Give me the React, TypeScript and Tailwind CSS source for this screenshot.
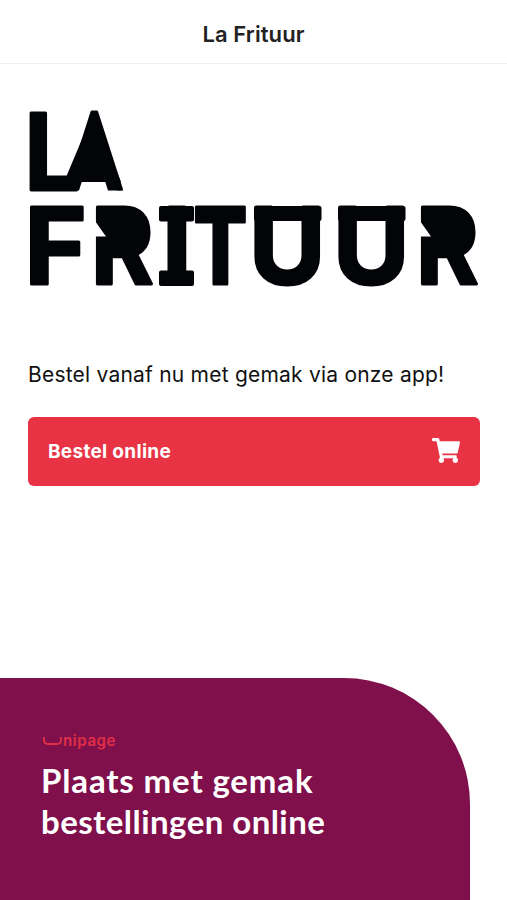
import React from 'react';
import { FaShoppingCart } from 'react-icons/fa';

interface Glyph {
  char: string;
  x: number;
  y: number;
  scale: number;
  weight?: number;
}

// Each letter of the wordmark has its own offset and horizontal stretch
const GLYPHS: Glyph[] = [
  { char: 'L', x: -3.5, y: 81.5, scale: 0.93 },
  { char: 'A', x: 36.5, y: 81, scale: 0.86, weight: 200 },
  { char: 'F', x: -3.5, y: 176, scale: 1 },
  { char: 'R', x: 63, y: 176, scale: 0.9 },
  { char: 'I', x: 134, y: 176, scale: 1 },
  { char: 'T', x: 165.5, y: 176, scale: 0.75, weight: 800 },
  { char: 'U', x: 221, y: 175.5, scale: 0.985 },
  { char: 'U', x: 305, y: 175.5, scale: 0.985 },
  { char: 'R', x: 388, y: 176, scale: 0.9 },
];

function Wordmark() {
  return (
    <svg
      viewBox="0 0 452 180"
      className="block w-[452px] h-[180px] overflow-visible"
      role="img"
      aria-label="La Frituur"
    >
      <g
        className="fill-[#020407] stroke-[#020407] font-['Inter'] font-bold"
        fontSize="106"
        strokeWidth="3"
        strokeLinejoin="round"
      >
        {GLYPHS.map((glyph, index) => (
          <text
            key={index}
            style={{ fontWeight: glyph.weight }}
            transform={`translate(${glyph.x} ${glyph.y}) scale(${glyph.scale} 1)`}
          >
            {glyph.char}
          </text>
        ))}
      </g>
      <g className="fill-[#020407]">
        {/* Filled counters */}
        <path d="M65 5L36 74h57z" />
        <rect x="80" y="108" width="28" height="28" />
        <rect x="405" y="108" width="28" height="28" />
        {/* Feet on both sides of the notch */}
        <path d="M36 73h18l-3 9.5H36zM77 73h14l4 9.5H80z" />
        {/* Slabs */}
        <rect x="131" y="98" width="35" height="15.5" rx="2" />
        <rect x="131" y="162.5" width="35" height="15.5" rx="2" />
        {/* Lids */}
        <rect x="226" y="98" width="67.5" height="15" rx="2" />
        <rect x="310" y="98" width="67.5" height="15" rx="2" />
      </g>
      {/* Notches cut into the R stems */}
      <path className="fill-white" d="M67 113l11 15.5H67zM392 113l11 15.5h-11z" />
    </svg>
  );
}

function Header({ title }: { title: string }) {
  return (
    <header className="h-16 border-b border-[#f1f1f1] flex items-center justify-center pt-1">
      <h1 className="font-['Inter',sans-serif] text-[22px] font-semibold leading-none tracking-[0.1px] text-[#222]">
        {title}
      </h1>
    </header>
  );
}

function Banner() {
  return (
    <section className="w-[470px] grow bg-[#7f104b] rounded-tr-[126px] pl-[41px] pt-[54px] text-white">
      {/* unipage logo */}
      <div className="flex items-start h-5 pl-0.5 text-[#e12f47]">
        <svg viewBox="0 0 20 9" className="w-5 h-[9px] mt-[5px]" fill="none" stroke="currentColor" strokeWidth="1.8">
          <path d="M1 0v3q0 4 4 4h9q4 0 4-4v-3" />
        </svg>
        <span className="font-['Inter',sans-serif] text-[15px] font-semibold leading-[18px] tracking-[0.6px]">
          nipage
        </span>
      </div>
      <h2 className="mt-2 font-['Lato',sans-serif] text-[33px] font-bold leading-[40.5px]">
        <span className="block tracking-[0.85px]">Plaats met gemak</span>
        <span className="block tracking-[0.45px]">bestellingen online</span>
      </h2>
    </section>
  );
}

export default function App() {
  return (
    <div className="flex flex-col w-full h-[900px] overflow-hidden bg-white">
      <Header title="La Frituur" />
      <main className="px-7 pt-11 h-[614px] shrink-0">
        <Wordmark />
        <p className="mt-[71px] h-8 whitespace-nowrap font-['Inter',sans-serif] text-[21px] leading-8 tracking-[0.22px] text-[#111]">
          Bestel vanaf nu met gemak via onze app!
        </p>
        <button className="mt-[26px] w-[452px] h-[69px] px-5 rounded-md bg-[#e83345] flex items-center justify-between text-white">
          <span className="mt-0.5 font-['Inter',sans-serif] text-[19px] font-bold tracking-[0.3px]">Bestel online</span>
          <FaShoppingCart className="w-7 h-[25px] -mt-0.5" />
        </button>
      </main>
      <Banner />
    </div>
  );
}
